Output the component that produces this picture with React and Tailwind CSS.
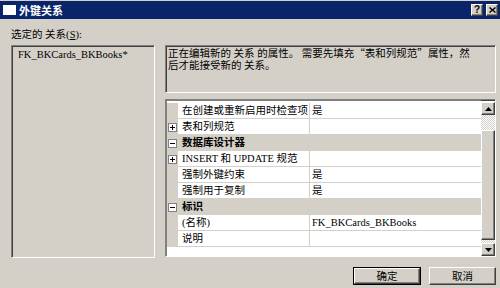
import React from 'react';

const rows = [
  { type: 'row', name: '在创建或重新启用时检查项', value: '是' },
  { type: 'row', name: '表和列规范', value: '', expand: '+' },
  { type: 'cat', name: '数据库设计器' },
  { type: 'row', name: 'INSERT 和 UPDATE 规范', value: '', expand: '+' },
  { type: 'row', name: '强制外键约束', value: '是' },
  { type: 'row', name: '强制用于复制', value: '是' },
  { type: 'cat', name: '标识' },
  { type: 'row', name: '(名称)', value: 'FK_BKCards_BKBooks' },
  { type: 'row', name: '说明', value: '' },
];

const ExpandBox = ({ sign }) => (
  <div className="w-[9px] h-[9px] border border-[#808080] bg-white flex items-center justify-center">
    <svg width="7" height="7" viewBox="0 0 7 7">
      <path d="M1 3.5h5" stroke="#000" strokeWidth="1" />
      {sign === '+' && <path d="M3.5 1v5" stroke="#000" strokeWidth="1" />}
    </svg>
  </div>
);

const Raised = ({ className = '', children }) => (
  <div
    className={`bg-[#d4d0c8] border border-t-white border-l-white border-r-[#404040] border-b-[#404040] shadow-[inset_-1px_-1px_0_#808080] flex items-center justify-center ${className}`}
  >
    {children}
  </div>
);

const Arrow = ({ up }) => (
  <svg width="7" height="4" viewBox="0 0 7 4">
    <path d={up ? 'M3.5 0L7 4H0z' : 'M0 0h7L3.5 4z'} fill="#000" />
  </svg>
);

const PropertyRow = ({ row }) => {
  if (row.type === 'cat') {
    return (
      <div className="flex h-[16px] bg-[#d4d0c8]">
        <div className="w-[11px] flex items-center justify-center">
          <ExpandBox sign="-" />
        </div>
        <div className="pl-[4px] font-bold leading-[16px]">{row.name}</div>
      </div>
    );
  }
  return (
    <div className="flex h-[16px]">
      <div className="w-[11px] bg-[#d4d0c8] flex items-center justify-center">
        {row.expand && <ExpandBox sign={row.expand} />}
      </div>
      <div className="w-[132px] pl-[4px] bg-white border-b border-r border-[#d4d0c8] leading-[15px] whitespace-nowrap overflow-hidden">
        {row.name}
      </div>
      <div className="flex-1 pl-[2px] bg-white border-b border-[#d4d0c8] leading-[15px] whitespace-nowrap overflow-hidden">
        {row.value}
      </div>
    </div>
  );
};

const sunken =
  'border border-t-[#808080] border-l-[#808080] border-r-white border-b-white shadow-[inset_1px_1px_0_#404040]';

export default function App() {
  return (
    <div className="w-[500px] h-[288px] bg-[#d4d0c8] overflow-hidden text-black text-[10.5px] font-['Liberation_Serif','Noto_Sans_CJK_SC',serif]">
      {/* title bar */}
      <div className="mt-[1px] h-[18px] bg-[#0a246a] flex items-center pl-[3px] pr-[2px]">
        <div className="w-[13px] h-[10px] bg-white" />
        <div className="ml-[3px] text-white font-bold text-[11px] font-['Noto_Sans_CJK_SC',sans-serif] leading-[18px]">外键关系</div>
        <div className="ml-auto flex gap-[3px]">
          <Raised className="w-[12px] h-[12px] text-[10px] font-bold font-['Liberation_Sans',sans-serif] leading-none">?</Raised>
          <Raised className="w-[12px] h-[12px]">
            <svg width="7" height="6" viewBox="0 0 7 6">
              <path d="M0.5 0.5L6.5 5.5M6.5 0.5L0.5 5.5" stroke="#000" strokeWidth="1.4" />
            </svg>
          </Raised>
        </div>
      </div>

      <div className="pl-[11px] pr-[4px]">
        <div className="pt-[9px] h-[23px] mb-[3px] leading-[14px]">
          选定的 关系(<span className="underline">S</span>):
        </div>

        <div className="flex gap-[10px]">
          <div className={`w-[144px] h-[213px] ${sunken} pl-[6px] pt-[2px] leading-[13px]`}>
            FK_BKCards_BKBooks*
          </div>

          <div className="flex-1 flex flex-col gap-[6px]">
            <div className={`h-[48px] ${sunken} pl-[2px] pt-[1px] leading-[12px] whitespace-nowrap`}>
              正在编辑新的 关系 的属性。 需要先填充<span className="font-['Noto_Sans_CJK_SC',sans-serif]">“表和列规范”</span>属性，然
              <br />
              后才能接受新的 关系。
            </div>

            <div className={`h-[158px] ${sunken} flex bg-white`}>
              <div className="flex-1 flex flex-col pt-[2px] border-l border-t border-[#808080]">
                {rows.map((r, i) => (
                  <PropertyRow key={i} row={r} />
                ))}
                <div className="flex-1 bg-white" />
              </div>
              <div className="w-[14px] flex flex-col">
                <Raised className="h-[13px] mt-[2px]">
                  <Arrow up />
                </Raised>
                <div className="h-[15px] bg-[repeating-conic-gradient(#ffffff_0%_25%,#d4d0c8_0%_50%)] bg-[length:2px_2px]" />
                <Raised className="flex-1" />
                <div className="h-[3px] bg-[repeating-conic-gradient(#ffffff_0%_25%,#d4d0c8_0%_50%)] bg-[length:2px_2px]" />
                <Raised className="h-[13px]">
                  <Arrow />
                </Raised>
              </div>
            </div>
          </div>
        </div>

        <div className="mt-[9px] flex justify-end gap-[8px] font-['Noto_Sans_CJK_SC',sans-serif]">
          <div className="w-[68px] h-[18px] border border-black">
            <Raised className="h-full">确定</Raised>
          </div>
          <Raised className="w-[67px] h-[18px]">取消</Raised>
        </div>
      </div>
    </div>
  );
}
